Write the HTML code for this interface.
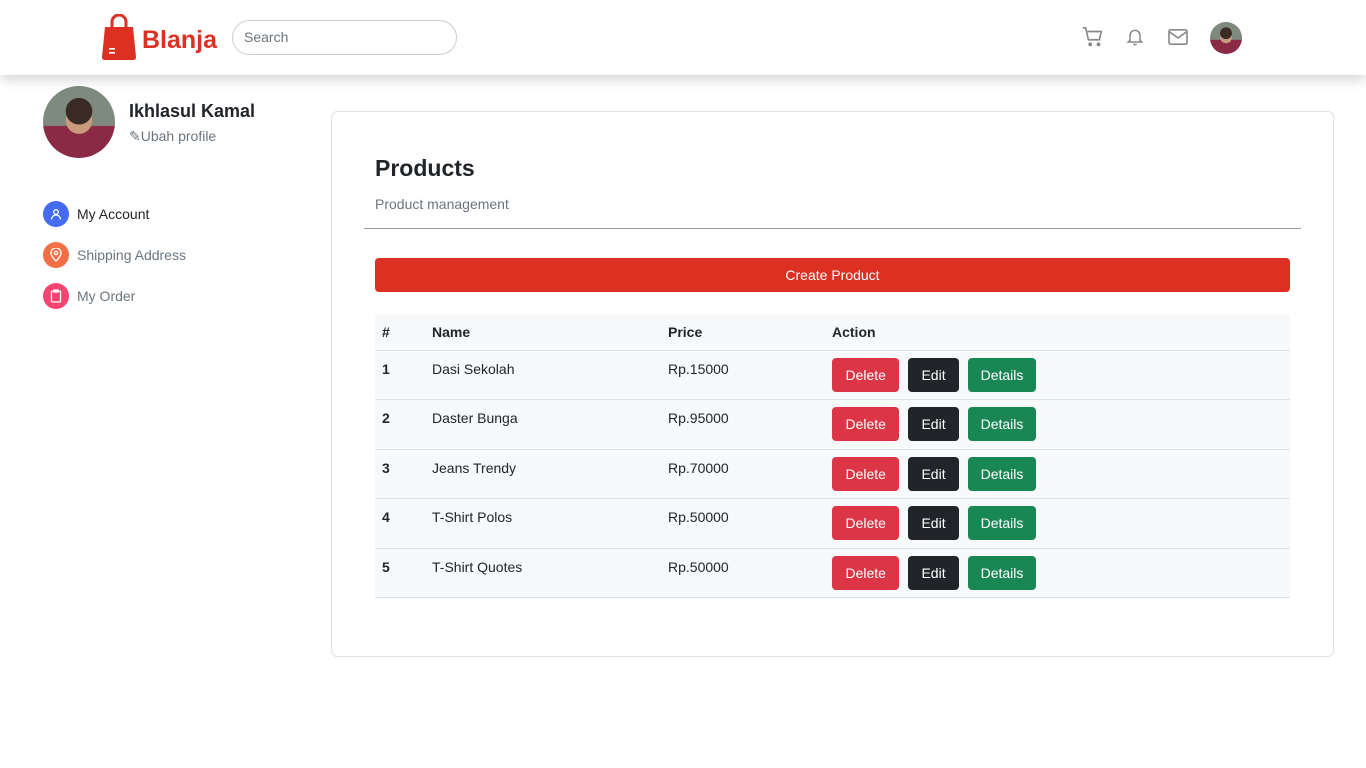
<!DOCTYPE html>
<html><head><meta charset="utf-8"><style>
*{box-sizing:border-box;margin:0;padding:0}
body{width:1366px;height:768px;background:#fff;font-family:"Liberation Sans",sans-serif;color:#212529;position:relative;overflow:hidden}
.nav{position:absolute;left:0;top:0;width:1366px;height:75px;background:#fff;box-shadow:0 4px 12px rgba(0,0,0,.18);z-index:2}
.logo{position:absolute;left:102px;top:14px}
.brand{position:absolute;left:142px;top:26px;font-size:25px;font-weight:bold;color:#db3022}
.search{position:absolute;left:232px;top:20px;width:225px;height:35px;border:1px solid #ccc;border-radius:18px;padding:0 11px;font-size:14px;color:#6c757d;line-height:33px}
.ic{position:absolute;top:26px}
.av{border-radius:50%;background:radial-gradient(circle at 50% 35%,#3a2a25 0 22%,transparent 23%),radial-gradient(circle at 50% 48%,#c99a7d 0 25%,transparent 26%),linear-gradient(180deg,#7f8a7f 0 55%,#8a2a45 56%)}
.name{position:absolute;left:129px;top:101px;font-size:18px;font-weight:bold}
.ubah{position:absolute;left:129px;top:128px;font-size:14px;color:#6c757d}
.menu{position:absolute;left:43px;font-size:14px;display:flex;align-items:center}
.menu .c{width:26px;height:26px;border-radius:50%;margin-right:8px;display:flex;align-items:center;justify-content:center}
.card{position:absolute;left:331px;top:111px;width:1003px;height:546px;border:1px solid #dee2e6;border-radius:6px}
h1{position:absolute;left:375px;top:155px;font-size:23px;font-weight:bold}
.sub{position:absolute;left:375px;top:196px;font-size:14px;color:#6c757d}
.hr{position:absolute;left:364px;top:228px;width:937px;border-top:1px solid #999}
.btnc{position:absolute;left:375px;top:258px;width:915px;height:34px;background:#db3022;color:#fff;border-radius:4px;text-align:center;line-height:34px;font-size:14px}
table{position:absolute;left:375px;top:314px;width:915px;border-collapse:collapse;font-size:14px;background:#f8f9fa}
th{text-align:left;height:36px;padding:0 7px;border-bottom:1px solid #dee2e6}
td{height:49.5px;padding:0 7px;border-bottom:1px solid #dee2e6;vertical-align:top;padding-top:10px}
td.a{padding-top:7px}
.b{display:inline-block;height:34px;line-height:34px;padding:0 13px;border-radius:4px;color:#fff;font-size:14px;margin-right:9px}
.b.d{padding:0 13.5px}
</style></head><body>
<div class="nav">
<svg class="logo" width="34" height="46" viewBox="0 0 34 46"><path d="M10 14V8a7 7 0 0 1 14 0v6" fill="none" stroke="#db3022" stroke-width="3"/><path d="M3 13h28l3 30q0 3-3 3H3q-3 0-3-3z" fill="#db3022"/><rect x="7" y="34" width="6" height="1.6" fill="#fff"/><rect x="7" y="38" width="6" height="1.6" fill="#fff"/></svg>
<div class="brand">Blanja</div>
<div class="search">Search</div>
<svg class="ic" style="left:1082px" width="22" height="22" viewBox="0 0 24 24" fill="none" stroke="#888" stroke-width="1.8"><path d="M1 2h3l3 13h12l2-9H6"/><circle cx="9" cy="20" r="1.2" fill="#888"/><circle cx="18" cy="20" r="1.2" fill="#888"/></svg>
<svg class="ic" style="left:1125px" width="20" height="22" viewBox="0 0 24 24" fill="none" stroke="#888" stroke-width="1.8"><path d="M6 16V10a6 6 0 0 1 12 0v6l2 2H4z"/><path d="M10 21h4"/></svg>
<svg class="ic" style="left:1167px;top:28px" width="22" height="18" viewBox="0 0 24 20" fill="none" stroke="#888" stroke-width="1.8"><rect x="2" y="2" width="20" height="16" rx="2"/><path d="M2 4l10 7 10-7"/></svg>
<div class="av" style="position:absolute;left:1210px;top:22px;width:32px;height:32px"></div>
</div>
<div class="av" style="position:absolute;left:43px;top:86px;width:72px;height:72px"></div>
<div class="name">Ikhlasul Kamal</div>
<div class="ubah">✎Ubah profile</div>
<div class="menu" style="top:201px"><div class="c" style="background:#456bf3"><svg width="12" height="12" viewBox="0 0 12 12" fill="none" stroke="#fff" stroke-width="1.3"><circle cx="6" cy="4" r="2.3"/><path d="M1.5 11.5a4.5 4.5 0 0 1 9 0"/></svg></div>My Account</div>
<div class="menu" style="top:242px;color:#6c757d"><div class="c" style="background:#f36f45"><svg width="12" height="14" viewBox="0 0 12 14" fill="none" stroke="#fff" stroke-width="1.3"><path d="M6 13s-5-4.5-5-8a5 5 0 0 1 10 0c0 3.5-5 8-5 8z"/><circle cx="6" cy="5" r="1.6"/></svg></div>Shipping Address</div>
<div class="menu" style="top:283px;color:#6c757d"><div class="c" style="background:#f3456f"><svg width="12" height="14" viewBox="0 0 12 14" fill="none" stroke="#fff" stroke-width="1.3"><rect x="1.5" y="2" width="9" height="11" rx="1"/><rect x="4" y="1" width="4" height="2" fill="#fff"/></svg></div>My Order</div>
<div class="card"></div>
<h1>Products</h1>
<div class="sub">Product management</div>
<div class="hr"></div>
<div class="btnc">Create Product</div>
<table>
<tr><th style="width:50px">#</th><th style="width:236px">Name</th><th style="width:164px">Price</th><th>Action</th></tr>
<tr><td><b>1</b></td><td>Dasi Sekolah</td><td>Rp.15000</td><td class="a"><span class="b d" style="background:#dc3545">Delete</span><span class="b" style="background:#212529">Edit</span><span class="b" style="background:#198754">Details</span></td></tr>
<tr><td><b>2</b></td><td>Daster Bunga</td><td>Rp.95000</td><td class="a"><span class="b d" style="background:#dc3545">Delete</span><span class="b" style="background:#212529">Edit</span><span class="b" style="background:#198754">Details</span></td></tr>
<tr><td><b>3</b></td><td>Jeans Trendy</td><td>Rp.70000</td><td class="a"><span class="b d" style="background:#dc3545">Delete</span><span class="b" style="background:#212529">Edit</span><span class="b" style="background:#198754">Details</span></td></tr>
<tr><td><b>4</b></td><td>T-Shirt Polos</td><td>Rp.50000</td><td class="a"><span class="b d" style="background:#dc3545">Delete</span><span class="b" style="background:#212529">Edit</span><span class="b" style="background:#198754">Details</span></td></tr>
<tr><td><b>5</b></td><td>T-Shirt Quotes</td><td>Rp.50000</td><td class="a"><span class="b d" style="background:#dc3545">Delete</span><span class="b" style="background:#212529">Edit</span><span class="b" style="background:#198754">Details</span></td></tr>
</table>
</body></html>
